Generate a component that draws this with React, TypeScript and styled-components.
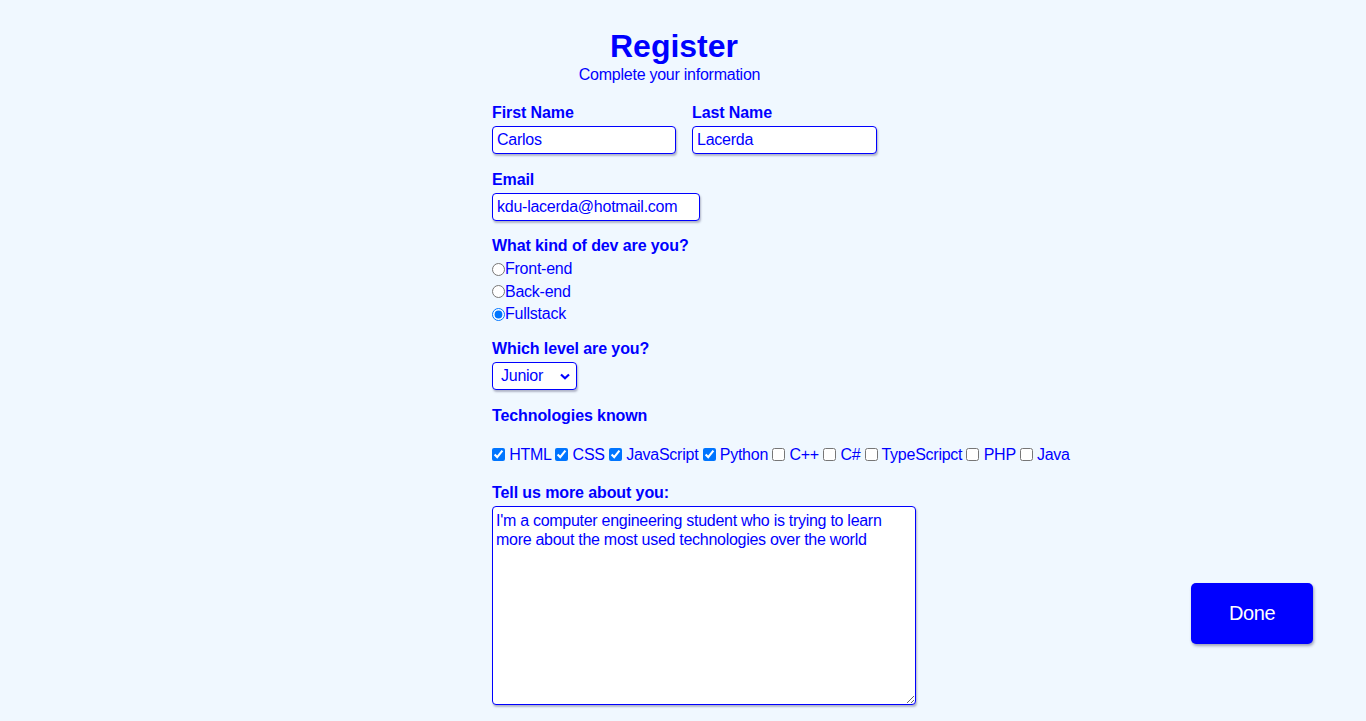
import React from "react";
import styled, { createGlobalStyle } from "styled-components";

const GlobalStyle = createGlobalStyle`
  html, body {
    margin: 0;
    padding: 0;
    background: #f0f8ff;
  }
  body {
    font-family: "Liberation Sans", Arial, sans-serif;
    color: #0000ff;
  }
`;

const Page = styled.div`
  display: flex;
  align-items: flex-start;
  padding: 27px 53px 16px 492px;
  min-height: 721px;
  box-sizing: border-box;
`;

const Form = styled.form`
  flex: 1;
  display: flex;
  flex-direction: column;
`;

const Header = styled.header`
  width: 364px;
  text-align: center;
`;

const Title = styled.h1`
  margin: 0;
  font-size: 32px;
  line-height: 38px;
  font-weight: 700;
  color: #0000ff;
`;

const Subtitle = styled.p`
  margin: 0 9px 0 0;
  padding-top: 1px;
  font-size: 16px;
  line-height: 18px;
  letter-spacing: -0.25px;
  color: #0000ff;
`;

const NameRow = styled.div`
  display: flex;
  gap: 16px;
  margin-top: 20px;
`;

const Section = styled.div<{ $top?: number }>`
  display: flex;
  flex-direction: column;
  align-items: flex-start;
  margin-top: ${(p) => p.$top ?? 16}px;
`;

const Label = styled.label<{ $gap?: number }>`
  font-size: 16px;
  line-height: 18px;
  font-weight: 700;
  letter-spacing: -0.1px;
  color: #0000ff;
  margin-bottom: ${(p) => p.$gap ?? 4}px;
`;

const TextInput = styled.input<{ $w: number }>`
  width: ${(p) => p.$w}px;
  height: 28px;
  box-sizing: border-box;
  padding: 0 4px;
  border: 1px solid #0000ff;
  border-radius: 4px;
  background: #fff;
  box-shadow: 1px 2px 2px rgba(60, 60, 100, 0.35);
  font-family: "Liberation Sans", Arial, sans-serif;
  font-size: 16px;
  letter-spacing: -0.25px;
  color: #0000ff;
  outline: none;
`;

const RadioList = styled.div`
  display: flex;
  flex-direction: column;
  margin-top: -1px;
`;

const RadioRow = styled.label`
  display: flex;
  align-items: center;
  height: 22.5px;
  font-size: 16px;
  letter-spacing: -0.25px;
  color: #0000ff;
`;

const Radio = styled.input`
  width: 13px;
  height: 13px;
  margin: 0;
`;

const SelectWrap = styled.div`
  position: relative;
  width: 85px;
  height: 28px;
`;

const Select = styled.select`
  appearance: none;
  width: 85px;
  height: 28px;
  box-sizing: border-box;
  padding: 0 0 0 8px;
  border: 1px solid #0000ff;
  border-radius: 4px;
  background: #fff;
  box-shadow: 1px 2px 2px rgba(60, 60, 100, 0.35);
  font-family: "Liberation Sans", Arial, sans-serif;
  font-size: 16px;
  letter-spacing: -0.25px;
  color: #0000ff;
  outline: none;
`;

const Chevron = styled.svg`
  position: absolute;
  right: 7px;
  top: 11px;
  pointer-events: none;
`;

const CheckRow = styled.div`
  margin-top: 21px;
  font-size: 16px;
  line-height: 18px;
  letter-spacing: -0.25px;
  color: #0000ff;
  white-space: nowrap;
`;

const Check = styled.input`
  width: 13px;
  height: 13px;
  margin: 0;
  vertical-align: -1px;
`;

const TextArea = styled.textarea`
  width: 424px;
  height: 199px;
  box-sizing: border-box;
  padding: 4px 3px 3px;
  border: 1px solid #0000ff;
  border-radius: 4px;
  background: #fff;
  box-shadow: 1px 2px 2px rgba(60, 60, 100, 0.35);
  font-family: "Liberation Sans", Arial, sans-serif;
  font-size: 16px;
  line-height: 19px;
  letter-spacing: -0.28px;
  color: #0000ff;
  outline: none;
`;

const DoneButton = styled.button`
  flex: none;
  align-self: flex-start;
  margin-top: 556px;
  width: 122px;
  height: 61px;
  border: none;
  border-radius: 5px;
  background: #0000ff;
  color: #fff;
  font-family: "Liberation Sans", Arial, sans-serif;
  font-size: 20px;
  letter-spacing: -0.4px;
  box-shadow: 1px 2px 3px rgba(60, 60, 100, 0.45);
  cursor: pointer;
`;

const devTypes = [
  { label: "Front-end", checked: false },
  { label: "Back-end", checked: false },
  { label: "Fullstack", checked: true },
];

const techs = [
  { label: "HTML", checked: true },
  { label: "CSS", checked: true },
  { label: "JavaScript", checked: true },
  { label: "Python", checked: true },
  { label: "C++", checked: false },
  { label: "C#", checked: false },
  { label: "TypeScripct", checked: false },
  { label: "PHP", checked: false },
  { label: "Java", checked: false },
];

export default function App() {
  return (
    <>
      <GlobalStyle />
      <Page>
        <Form onSubmit={(e) => e.preventDefault()}>
          <Header>
            <Title>Register</Title>
            <Subtitle>Complete your information</Subtitle>
          </Header>

          <NameRow>
            <Section $top={0}>
              <Label>First Name</Label>
              <TextInput $w={184} defaultValue="Carlos" />
            </Section>
            <Section $top={0}>
              <Label>Last Name</Label>
              <TextInput $w={185} defaultValue="Lacerda" />
            </Section>
          </NameRow>

          <Section $top={17}>
            <Label>Email</Label>
            <TextInput $w={208} type="email" defaultValue="kdu-lacerda@hotmail.com" />
          </Section>

          <Section $top={16}>
            <Label>What kind of dev are you?</Label>
            <RadioList>
              {devTypes.map((d) => (
                <RadioRow key={d.label}>
                  <Radio type="radio" name="dev" defaultChecked={d.checked} />
                  {d.label}
                </RadioRow>
              ))}
            </RadioList>
          </Section>

          <Section $top={14}>
            <Label>Which level are you?</Label>
            <SelectWrap>
              <Select defaultValue="Junior">
                <option>Junior</option>
                <option>Pleno</option>
                <option>Senior</option>
              </Select>
              <Chevron width="10" height="7" viewBox="0 0 10 7">
                <path d="M1 1.5 L5 5.2 L9 1.5" fill="none" stroke="#0000ff" strokeWidth="2.2" />
              </Chevron>
            </SelectWrap>
          </Section>

          <Section $top={17}>
            <Label $gap={0}>Technologies known</Label>
            <CheckRow>
              {techs.map((t, i) => (
                <React.Fragment key={t.label}>
                  {i > 0 ? " " : ""}
                  <Check type="checkbox" defaultChecked={t.checked} /> {t.label}
                </React.Fragment>
              ))}
            </CheckRow>
          </Section>

          <Section $top={20}>
            <Label>Tell us more about you:</Label>
            <TextArea defaultValue={"I'm a computer engineering student who is trying to learn more about the most used technologies over the world"} />
          </Section>
        </Form>
        <DoneButton type="submit">Done</DoneButton>
      </Page>
    </>
  );
}
